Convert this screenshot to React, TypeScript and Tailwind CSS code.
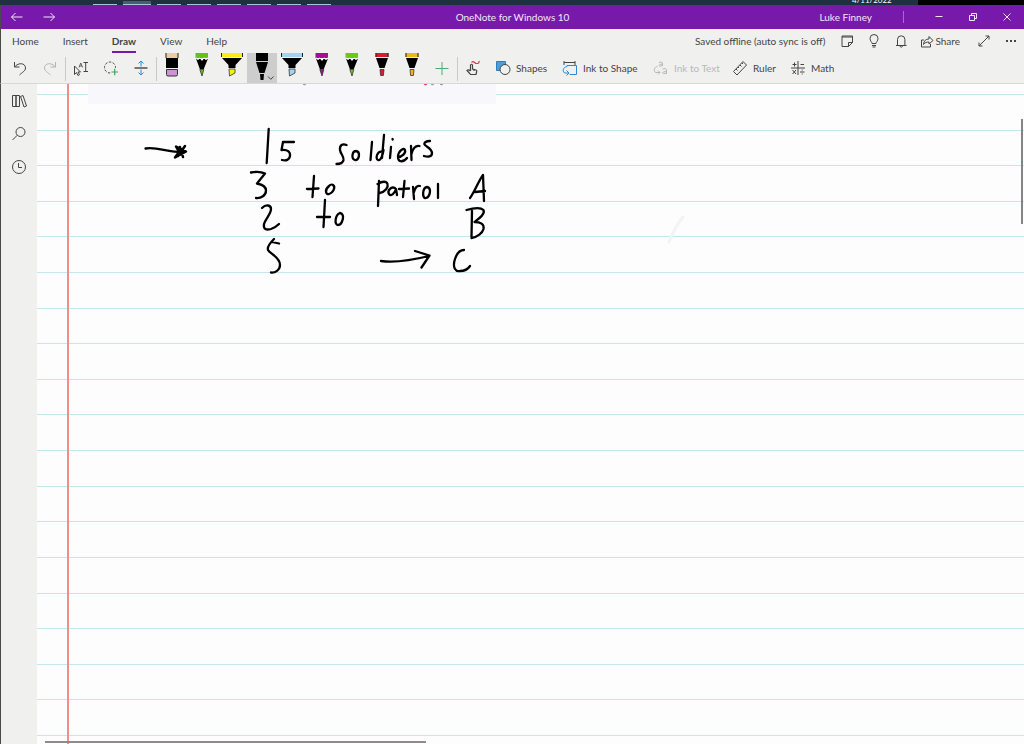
import type { ReactNode } from "react";
import clsx from "clsx";

const tabs = ["Home", "Insert", "Draw", "View", "Help"];
const ruledLines = Array.from({ length: 19 }, (_, i) => i);

/* ================= ICONS ================= */

function Icon({ children, className }: { children: ReactNode; className?: string }) {
  return (
    <svg
      width="16"
      height="16"
      viewBox="0 0 16 16"
      fill="none"
      stroke="currentColor"
      strokeWidth="1"
      className={clsx("shrink-0", className)}
      aria-hidden="true"
    >
      {children}
    </svg>
  );
}

type PenKind = "eraser" | "pencil" | "highlighter" | "ballpoint" | "felt";

function Pen({ kind, color }: { kind: PenKind; color: string }) {
  return (
    <svg width="30" height="30" viewBox="0 0 30 30" className="block" aria-hidden="true">
      {kind === "eraser" && (
        <>
          <path d="M9 0h12v5H9z" fill="#e8cf9f" />
          <path d="M9 0v5M21 0v5" stroke="#222" strokeWidth="1" />
          <path d="M9 5h12v10H9z" fill="#000" />
          <path d="M9.500 16.500h11v5q0 1.500-1.500 1.500h-8q-1.500 0-1.500-1.500z" fill="#cf92d2" stroke="#333" />
        </>
      )}
      {kind === "pencil" && (
        <>
          <path d="M8.500 0h12.500v5H8.500z" fill={color} />
          <path d="M9 5.500L11 7l2-1.500L15 8l2-2.500L19 7l2-1.500-4.200 10.500h-4z" fill="#000" />
          <path d="M9 5l2 1 2-1 2 2 2-2 2 1 2-1" stroke="#fff" fill="none" />
          <path d="M12.800 16.500h4L15 23z" fill={color} stroke="#222" strokeWidth=".7" />
        </>
      )}
      {kind === "highlighter" && (
        <>
          <path d="M4.500 0h21v4h-21z" fill={color} />
          <path d="M4.500 0v4M25.500 0v4" stroke="#222" />
          <path d="M5 5h20l-6.500 7v3h-7v-3z" fill="#000" />
          <path d="M12 16h6v4l-5.500 3z" fill={color} stroke="#333" strokeWidth=".8" />
        </>
      )}
      {kind === "ballpoint" && (
        <>
          <path d="M9 0h12v8H9z" fill={color} />
          <path d="M9 9h12l-3.500 11h-5z" fill={color} />
          <path d="M13 21h4l-.5 6h-3z" fill={color} />
          <path d="M21 23.500l2.800 2.800 2.800-2.800" stroke="#444" fill="none" />
        </>
      )}
      {kind === "felt" && (
        <>
          <path d="M8.500 0h13v4h-13z" fill={color} />
          <path d="M9 0v4M21 0v4" stroke="#222" />
          <path d="M9 5h12l-3.500 10h-5z" fill="#000" />
          <path d="M13 16.500h4l-.6 6h-2.800z" fill={color} stroke="#222" strokeWidth=".7" />
        </>
      )}
    </svg>
  );
}

const pens: { name: string; kind: PenKind; color: string; selected?: boolean }[] = [
  { name: "Eraser", kind: "eraser", color: "#cf92d2" },
  { name: "Green pencil", kind: "pencil", color: "#61c314" },
  { name: "Yellow highlighter", kind: "highlighter", color: "#f7ee16" },
  { name: "Black pen", kind: "ballpoint", color: "#000000", selected: true },
  { name: "Blue highlighter", kind: "highlighter", color: "#a3d3f2" },
  { name: "Purple pencil", kind: "pencil", color: "#a50d96" },
  { name: "Lime pencil", kind: "pencil", color: "#6cc718" },
  { name: "Red pen", kind: "felt", color: "#d41f33" },
  { name: "Gold pen", kind: "felt", color: "#f2b321" },
];

function ToolButton({ label, children }: { label: string; children: ReactNode }) {
  return (
    <button type="button" aria-label={label} className="flex h-[30px] w-[30px] shrink-0 items-center justify-center">
      {children}
    </button>
  );
}

function Divider() {
  return <div className="mt-1 h-6 w-px shrink-0 bg-[#c9c9c9]" />;
}

function LabelButton({ label, className, children }: { label: string; className: string; children: ReactNode }) {
  return (
    <button type="button" className={clsx("flex h-[30px] shrink-0 items-center gap-[5px] pl-[7px] whitespace-nowrap", className)}>
      {children}
      {label}
    </button>
  );
}

/* ================= HANDWRITING ================= */

function Ink() {
  return (
    <svg
      width="660"
      height="200"
      viewBox="37 84 660 200"
      className="absolute top-0 left-0"
      fill="none"
      stroke="#000"
      strokeWidth="2.300"
      strokeLinecap="round"
      strokeLinejoin="round"
      role="img"
      aria-label="15 soldiers, 3 to patrol A, 2 to B, 5 to C"
    >
      {/* pointer arrow */}
      <path d="M145.500 148.500c12-2 22 4 39 3.500" />
      <path d="M176 146.500l10 5-11 6 4-5.500zM185 146l-7 10M180 147l3 10" strokeWidth="2.500" fill="#000" />

      {/* 15 soldiers */}
      <path d="M268.700 129l-2 34M283 142l11 0M283 142l-1.500 8c6-1 9 2 8.500 6s-4 5-8 4" />
      <path d="M346.500 145c-4-1.500-7 0-6.500 5 .5 4 4 6 3.500 10-.5 3-4 4-7 4" />
      <path d="M356 151c-4 0-5 8-1 9s6-8 1-9M372 142l-1.500 18" />
      <path d="M383 152c-6-2-8 7-5 8s5-6 5.500-10M384 135l-2 23M391 147l-1 11M392.500 139l.2 .5" />
      <path d="M398 157c4 0 8-4 7-7s-7 1-7 7 6 5 9 1M411 146l.5 14M411.500 154c1-5 4-9 8-8" />
      <path d="M430 141c-4 0-7 2-5 4s7 4 7 8-4 4-8 3" />

      {/* 3 to patrol A */}
      <path d="M251 172.500c5-1 10-1 14 1l-8 10c5 1 9 3 9 7 0 5-5 8-10 7.500" />
      <path d="M314 176l-1.500 21M307 189l11.500-.5M329 186c-5 4-3 9 0 8 4-1 7-7 4-9-1-1-3 0-4 1" />
      <path d="M379 181l-1 25M377.500 184c5-3 9-3 10 0s-2 8-8 9M395 188c-4-2-8 3-6 6s6-1 7-5l1 6" />
      <path d="M404.500 181l-1.500 16M399 189l10-.5M413 187l1 12M414 192c1-4 3-7 6-6" />
      <path d="M427 187c-5 1-5 12-1 11s6-10 1-11M438 184v14" />
      <path d="M470 198c4-5 9-18 13-23l1 26M475 192l10-1" />

      {/* 2 to B */}
      <path d="M262 208c4-4 9-3 9 1 0 5-5 9-7 15-1 6 3 6 7 5 3-1 6-3 8-5" />
      <path d="M325 200l-1.500 27M317 217h13M340 213c-5 2-6 12-2 12s8-11 2-12" />
      <path d="M466.500 210c7-2 14-3 17 0 2 4-5 9-9 12 6 0 10 2 9 7-1 4-6 8-12 9M472 211l-.5 26" />

      {/* 5 -> C */}
      <path d="M279 243.500l-7-1.500M274 239c-5 5-7 8-6 11 2 4 12 7 12 15 0 5-5 8-9 7.500" />
      <path d="M381 261c17 2 32-1 48-5M415 251l14.500 4.500-8 12M464 250c-4 0-7 3-9 9-3 9 1 13 5 12 4 0 8-2 10-5" />

      {/* edge of the pasted picture */}
      <path d="M425 84h1" stroke="#e0405c" />
      <path d="M304 84h1M432 84h1M441 84h1" stroke="#999" />

      <path d="M683 217c-5 6-10 15-14 25" stroke="#f3f2f4" strokeWidth="3" />
    </svg>
  );
}

export default function App() {
  return (
    <div className="flex min-h-screen flex-col bg-[#f0f0ef] font-[Lato,'Open_Sans',sans-serif] text-[10px] leading-4 text-[#444]">
      {/* ================= DESKTOP STRIP ================= */}
      <div className="flex h-[5px] overflow-hidden bg-[#1d3141]" aria-hidden="true">
        <div className="flex flex-1 items-end gap-[6px] pl-[93px]">
          <div className="h-px w-6 bg-[#a9c5d3]" />
          <div className="h-1 w-7 border-b border-[#a9c5d3] bg-[#45606e]" />
          <div className="h-px w-6 bg-[#a9c5d3]" />
          <div className="h-px w-6 bg-[#a9c5d3]" />
          <div className="h-px w-6 bg-[#a9c5d3]" />
          <div className="h-px w-6 bg-[#a9c5d3]" />
          <div className="h-px w-6 bg-[#a9c5d3]" />
          <div className="h-px w-6 bg-[#a9c5d3]" />
        </div>
        <div className="flex w-[66px] items-end text-[8px] leading-[10px] text-white">4/11/2022</div>
        <div className="w-[106px] bg-black" />
      </div>

      {/* ================= TITLE BAR ================= */}
      <header className="grid h-6 grid-cols-[1fr_auto_1fr] items-center border-l border-[#4a4a4a] bg-[#7719aa] text-[#f3e8f8]">
        <div className="flex">
          <button type="button" aria-label="Back" className="flex h-6 w-8 items-center justify-center">
            <Icon><path d="M2.500 8h11M6.500 4l-4 4 4 4" /></Icon>
          </button>
          <button type="button" aria-label="Forward" className="flex h-6 w-8 items-center justify-center">
            <Icon><path d="M2.500 8h11M9.500 4l4 4-4 4" /></Icon>
          </button>
        </div>
        <h1>OneNote for Windows 10</h1>
        <div className="flex items-center justify-end">
          <span>Luke Finney</span>
          <div className="mr-[18px] ml-[31px] h-3 w-px bg-[#a56bc8]" />
          <button type="button" aria-label="Minimize" className="flex h-6 w-[34px] items-center justify-center">
            <Icon><path d="M4.500 7.500h7" /></Icon>
          </button>
          <button type="button" aria-label="Restore" className="flex h-6 w-[34px] items-center justify-center">
            <Icon><path d="M4.500 6.500h5v5h-5zM6.500 6.500v-2h5v5h-2" /></Icon>
          </button>
          <button type="button" aria-label="Close" className="flex h-6 w-[34px] items-center justify-center">
            <Icon><path d="M4.500 4.500l7 7M11.500 4.500l-7 7" /></Icon>
          </button>
        </div>
      </header>

      {/* ================= TABS ================= */}
      <div className="flex h-6 items-center justify-between border-l border-[#4a4a4a]">
        <nav className="flex gap-6 pl-[11px]">
          {tabs.map((tab) => (
            <button
              key={tab}
              type="button"
              className={clsx(
                "h-6 border-b-2 pt-0.5",
                tab === "Draw" ? "border-[#7719aa] font-bold" : "border-transparent"
              )}
            >
              {tab}
            </button>
          ))}
        </nav>
        <div className="flex items-center">
          <span className="mr-[14px]">Saved offline (auto sync is off)</span>
          <button type="button" aria-label="Notes" className="w-[27px]">
            <Icon><path d="M3 3h10.500v6.500l-4 4H3zM13.500 9.500h-4v4M3 4h10.500" /></Icon>
          </button>
          <button type="button" aria-label="Tell me" className="w-[27px]">
            <Icon><path d="M6 10.500c0-1.500-2-2.500-2-5a4 4 0 018 0c0 2.500-2 3.500-2 5zM6 12.500h4M6.500 14h3" /></Icon>
          </button>
          <button type="button" aria-label="Notifications" className="w-[26px]">
            <Icon><path d="M3 12.500h10.500M4.500 12.500V6.500a3.700 3.700 0 017.400 0v6M6.500 13q1.700 2.500 3.400 0" /></Icon>
          </button>
          <button type="button" className="mr-4 flex items-center">
            <Icon><path d="M5 7H2.500v7h9v-3M4.500 11.500c.5-4 2.500-5.500 5.500-5.500V3.500l4 4-4 3.500V9c-2.500 0-4 .5-5.500 2.500z" /></Icon>
            Share
          </button>
          <button type="button" aria-label="Full screen" className="w-[27px]">
            <Icon><path d="M3 13L13 3M9.500 3H13v3.500M3 9.500V13h3.500" /></Icon>
          </button>
          <button type="button" aria-label="More" className="w-[21px]">
            <Icon><path d="M3 8h2M7 8h2M11 8h2" strokeWidth="2" /></Icon>
          </button>
        </div>
      </div>

      {/* ================= DRAW TOOLBAR ================= */}
      <div className="flex h-[31px] border-b border-l border-b-[#d8d8d8] border-l-[#4a4a4a] pl-1">
        <ToolButton label="Undo">
          <Icon><path d="M2.500 2v5h5M2.500 7c4-5 11-4 11 1 0 3-3 4-6 7" /></Icon>
        </ToolButton>
        <ToolButton label="Redo">
          <Icon className="text-[#b5b5b5]"><path d="M13.500 2v5h-5M13.500 7c-4-5-11-4-11 1 0 3 3 4 6 7" /></Icon>
        </ToolButton>
        <Divider />
        <ToolButton label="Select objects or type text">
          <Icon>
            <path d="M1.500 6v8.500l2-2 1.500 3 1.500-.8-1.500-2.700h2.500z" />
            <path d="M6 7.500l1.800-4.500 1.800 4.500M6.500 6h2.500" strokeWidth=".8" />
            <path d="M10.500 2.500h4.500M10.500 11.500h4.500M12.700 2.500v9" />
          </Icon>
        </ToolButton>
        <ToolButton label="Lasso select">
          <Icon>
            <circle cx="7" cy="7.500" r="5.500" strokeDasharray="2.500 1.500" />
            <path d="M7.500 8h7v7h-7z" fill="#f0f0ef" stroke="none" />
            <path d="M8.500 12h6.500M11.700 8.700v6.600" stroke="#3fa556" strokeWidth="1.200" />
          </Icon>
        </ToolButton>
        <ToolButton label="Insert space">
          <Icon>
            <path d="M8 6.500V1M5.500 3.500L8 1l2.500 2.500M8 9.500V15M5.500 12.500L8 15l2.500-2.500" stroke="#2c8ad0" />
            <path d="M1.500 8h13" stroke="#777" strokeWidth="2" />
          </Icon>
        </ToolButton>
        <Divider />
        {pens.map((pen) => (
          <button
            key={pen.name}
            type="button"
            aria-label={pen.name}
            aria-pressed={!!pen.selected}
            className={clsx("h-[30px] w-[30px] shrink-0", pen.selected && "bg-[#cdcdcd]")}
          >
            <Pen kind={pen.kind} color={pen.color} />
          </button>
        ))}
        <ToolButton label="Add pen">
          <Icon className="text-[#4eaa74]"><path d="M1.500 8.500h13M8 2v13" /></Icon>
        </ToolButton>
        <Divider />
        <ToolButton label="Draw with touch">
          <Icon>
            <path d="M5.500 11V5q1-1.500 2 0V9l3.500 1q1 .3.700 1.500l-.7 3H5.500L2 10.500q1.500-1.500 3.500.5M9 9.500v1.500" strokeWidth="1.200" />
            <path d="M6.500 2.500C8.500 0 9.500 3.500 11.500 3.500S14.500 2.500 14 .8" stroke="#d9384e" strokeWidth="1.200" />
          </Icon>
        </ToolButton>
        <LabelButton label="Shapes" className="w-[67px]">
          <Icon>
            <path d="M1.500 1.500h9v9h-9z" fill="#4d9ddb" stroke="#2c7cc0" />
            <circle cx="10" cy="9.500" r="5" fill="#f0f0ef" />
          </Icon>
        </LabelButton>
        <LabelButton label="Ink to Shape" className="w-[91px]">
          <Icon>
            <path d="M2 1v4M13 1v4M2 2.500h11" />
            <path d="M5 6.500V5.500h9.500v9h-7" stroke="#2c8ad0" />
            <path d="M5 6.500c-4 1-5 4-2.500 6.500H6M4.500 10.500L7 13l-2.500 2.500" stroke="#2c8ad0" />
          </Icon>
        </LabelButton>
        <button
          type="button"
          disabled
          className="flex h-[30px] w-[79px] shrink-0 items-center gap-[5px] pl-[7px] whitespace-nowrap text-[#b9b9b9]"
        >
          <Icon>
            <path d="M6 2.500q3.500-1.500 3.500 1V6M9.500 4Q6 4 6 5.500t3.500 0" />
            <path d="M9.500 9q4-1.500 4 1v4M13.500 11.500q-4 0-4 1.500t4 0" />
            <path d="M4.500 6.500C1 7 .5 11 2.500 12.500H7M5 10.500l2 2-2 2" />
          </Icon>
          Ink to Text
        </button>
        <LabelButton label="Ruler" className="w-[58px]">
          <Icon>
            <path d="M1.500 11.500l9.500-10 3.500 3.500-9.500 10zM4 9l1.500 1.500M6 7l1 1M8 5l1.500 1.500M10 3l1 1" />
          </Icon>
        </LabelButton>
        <LabelButton label="Math" className="w-[58px]">
          <Icon>
            <path d="M8 1v14M1 8h14M2.500 4.500h4M4.500 2.500v4M10.500 4.500h3.500M2.500 10l3.500 4M6 10l-3.500 4M10 12h4.500M12.200 9.500v1M12.200 13.500v1" />
          </Icon>
        </LabelButton>
      </div>

      {/* ================= NOTEBOOK ================= */}
      <div className="flex flex-1 border-l border-[#4a4a4a]">
        <aside className="flex w-9 shrink-0 flex-col">
          <button type="button" aria-label="Show notebooks" className="flex h-[33px] items-center justify-center">
            <Icon><path d="M1.500 2.500H5v11H1.500zM5 2.500h3.500v11H5zM9.500 3.500l2.500-1 3.500 10.500-2.500 1z" /></Icon>
          </button>
          <button type="button" aria-label="Search" className="flex h-[33px] items-center justify-center">
            <Icon><circle cx="9.500" cy="6" r="4.500" /><path d="M6.300 9.200L1.500 14" /></Icon>
          </button>
          <button type="button" aria-label="Recent notes" className="flex h-[33px] items-center justify-center">
            <Icon><circle cx="8" cy="8" r="6.500" /><path d="M7.500 4v4.500H11" /></Icon>
          </button>
        </aside>

        <main className="relative flex flex-1 flex-col justify-between overflow-hidden bg-[#fdfdfd] pt-[10px] pb-2">
          {ruledLines.map((line) => (
            <div key={line} className="h-px bg-[#c5e6ee]" />
          ))}
          <div className="absolute top-0 left-[51px] h-5 w-[408px] bg-[#f8f8fc]" />
          <div className="absolute inset-y-0 left-[30px] w-0.5 bg-[#f28d8d]" />
          <Ink />
          {/* scroll bars */}
          <div className="absolute top-[35px] right-px h-[105px] w-0.5 bg-[#858585]" />
          <div className="absolute bottom-px left-2 h-0.5 w-[381px] bg-[#8f8b8b]" />
        </main>
      </div>
    </div>
  );
}
